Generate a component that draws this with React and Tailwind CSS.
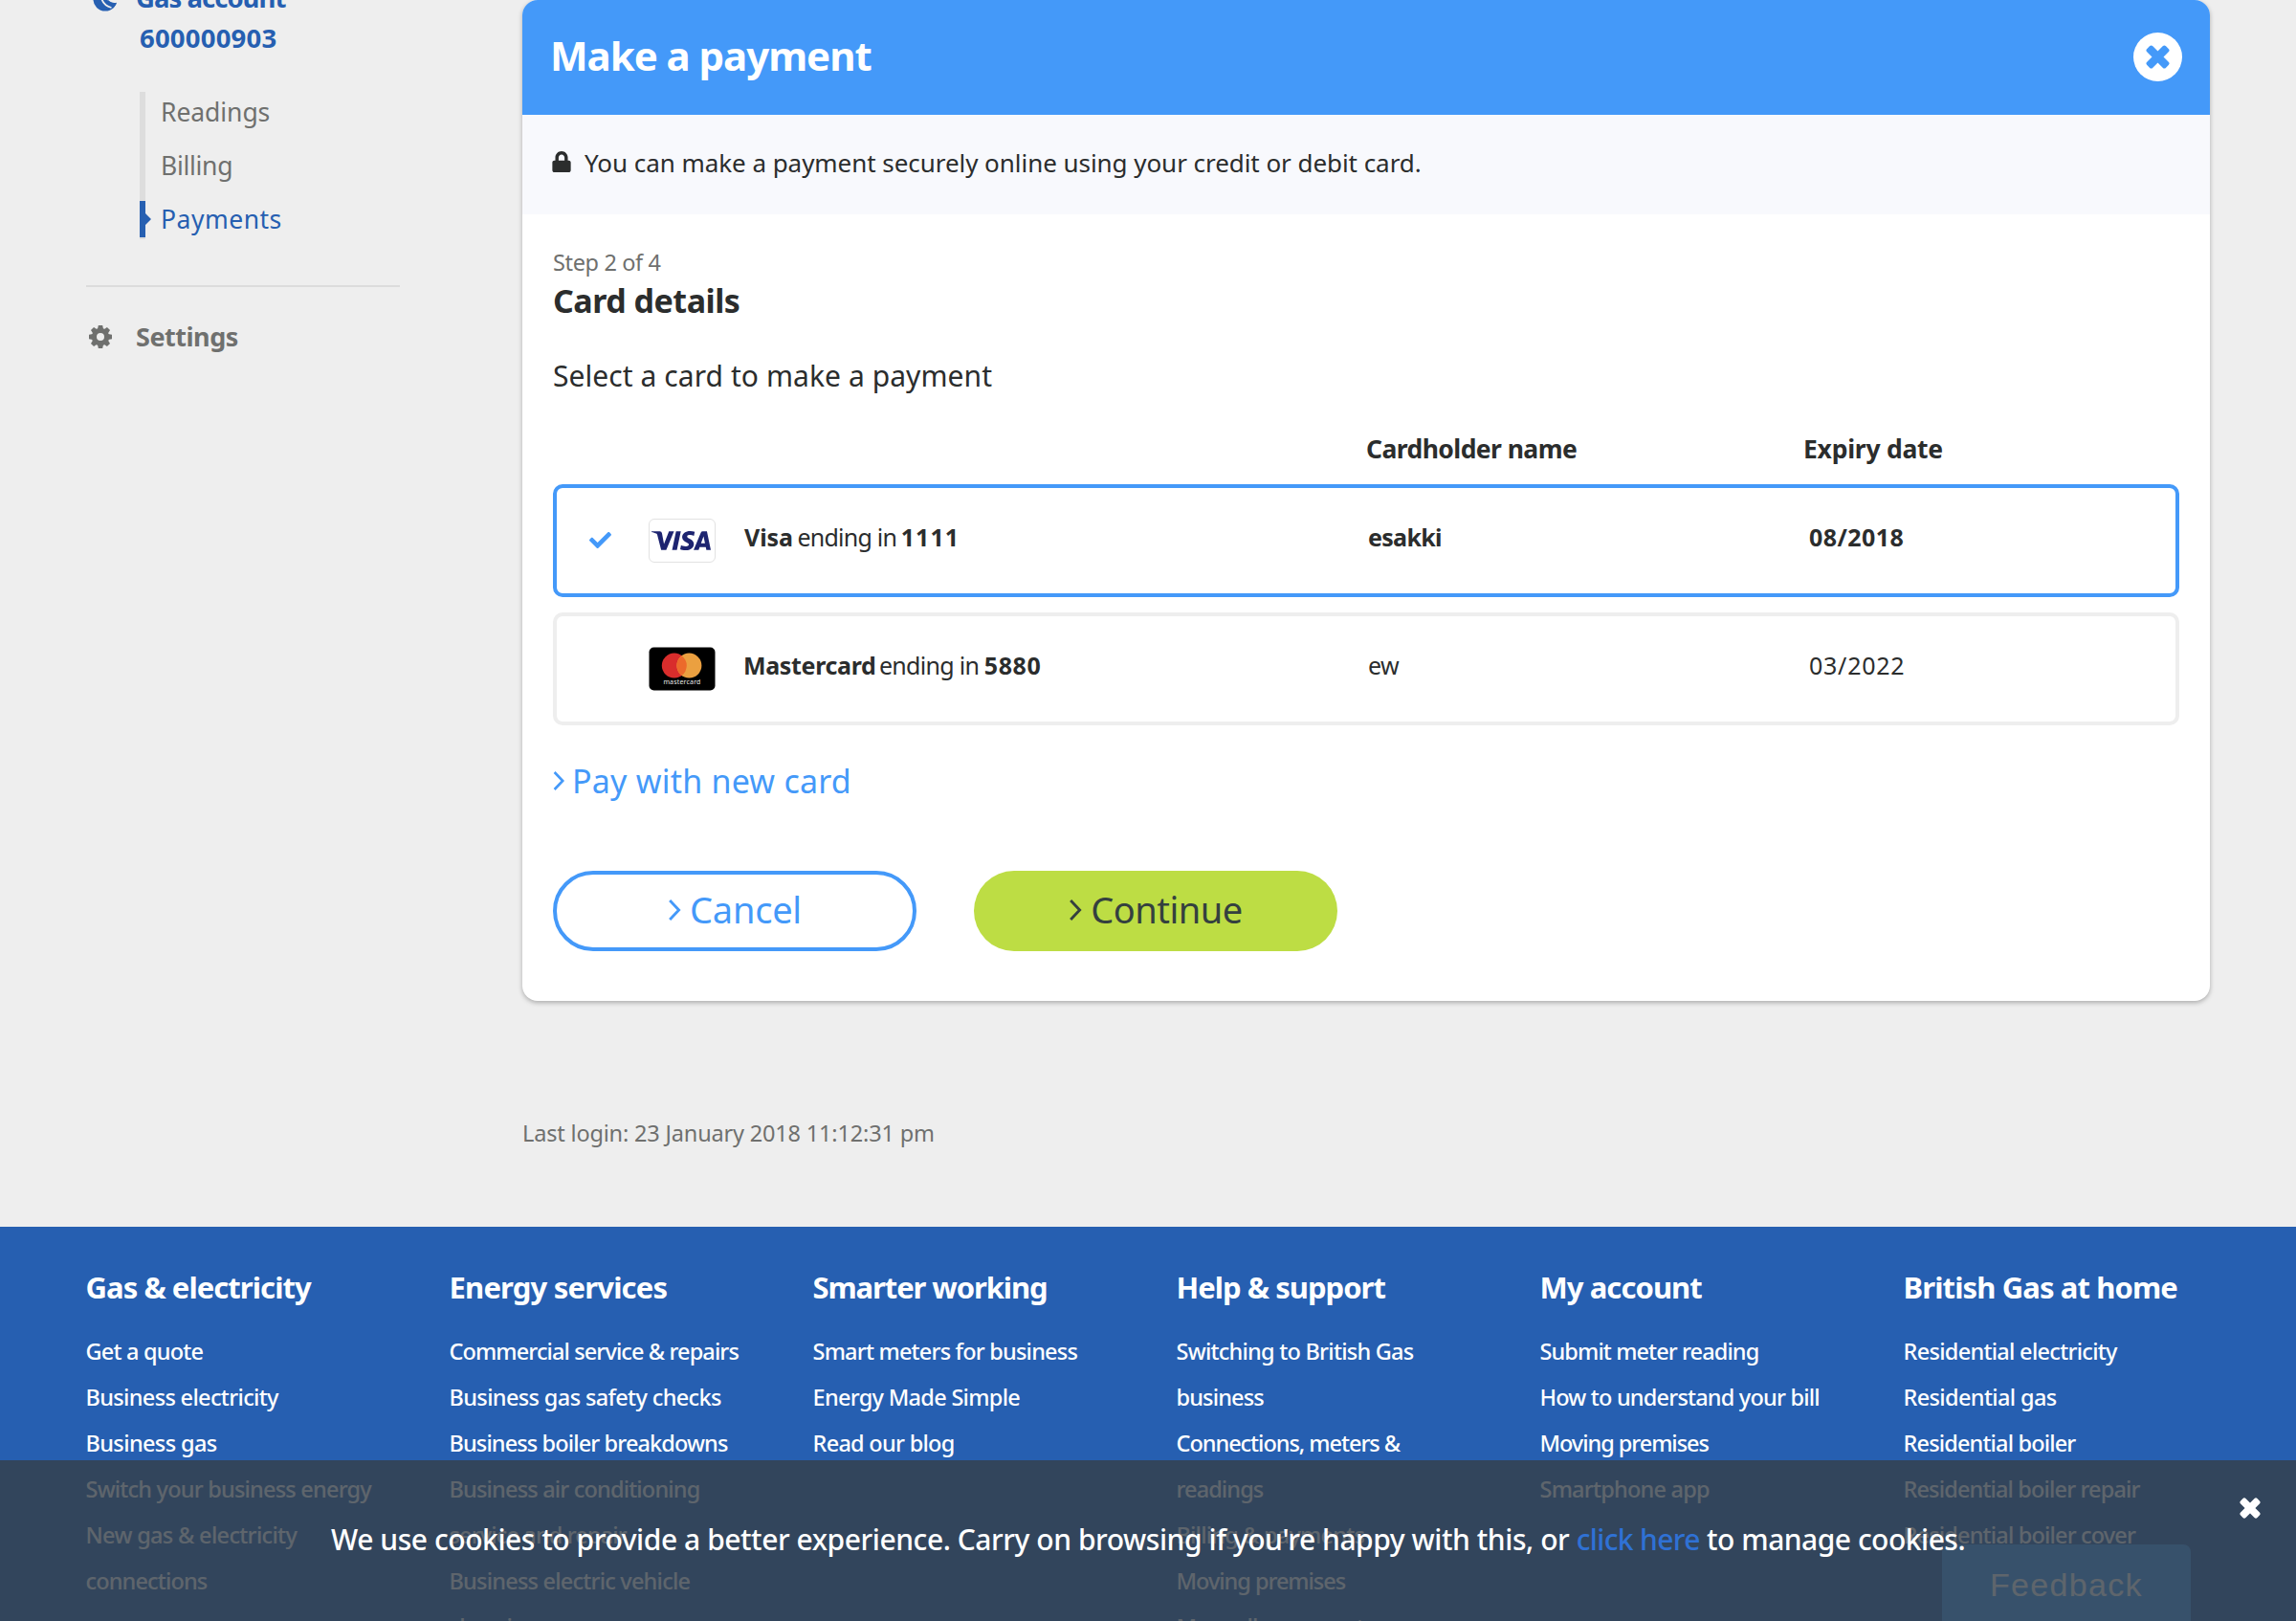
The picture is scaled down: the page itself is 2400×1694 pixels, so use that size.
import { FaCheck, FaLock } from "react-icons/fa";
import { SiVisa } from "react-icons/si";

const footerColumns = [
  {
    title: "Gas & electricity",
    titleClass: "tracking-[-0.0302em]",
    links: [
      ["Get a quote", "tracking-[-0.79px]"],
      ["Business electricity", "tracking-[-0.66px]"],
      ["Business gas", "tracking-[-0.62px]"],
      ["Switch your business energy", "tracking-[-0.79px]"],
      ["New gas & electricity", "tracking-[-0.67px]"],
      ["connections", "tracking-[-0.85px]"],
    ],
  },
  {
    title: "Energy services",
    titleClass: "tracking-[-0.0261em]",
    links: [
      ["Commercial service & repairs", "tracking-[-0.89px]"],
      ["Business gas safety checks", "tracking-[-0.63px]"],
      ["Business boiler breakdowns", "tracking-[-0.88px]"],
      ["Business air conditioning", "tracking-[-0.82px]"],
      ["service and repair", "tracking-[-0.86px]"],
      ["Business electric vehicle", "tracking-[-0.78px]"],
      ["charging", "tracking-[-0.8px]"],
    ],
  },
  {
    title: "Smarter working",
    titleClass: "tracking-[-0.0358em]",
    links: [
      ["Smart meters for business", "tracking-[-0.79px]"],
      ["Energy Made Simple", "tracking-[-0.7px]"],
      ["Read our blog", "tracking-[-0.72px]"],
    ],
  },
  {
    title: "Help & support",
    titleClass: "tracking-[-0.0311em]",
    links: [
      ["Switching to British Gas", "tracking-[-0.75px]"],
      ["business", "tracking-[-0.86px]"],
      ["Connections, meters &", "tracking-[-1.03px]"],
      ["readings", "tracking-[-0.9px]"],
      ["Billing & payments", "tracking-[-0.8px]"],
      ["Moving premises", "tracking-[-1.03px]"],
      ["Manually payment", "tracking-[-0.8px]"],
    ],
  },
  {
    title: "My account",
    titleClass: "tracking-[-0.0302em]",
    links: [
      ["Submit meter reading", "tracking-[-0.9px]"],
      ["How to understand your bill", "tracking-[-0.8px]"],
      ["Moving premises", "tracking-[-1.05px]"],
      ["Smartphone app", "tracking-[-0.78px]"],
    ],
  },
  {
    title: "British Gas at home",
    titleClass: "tracking-[-0.0285em]",
    links: [
      ["Residential electricity", "tracking-[-0.71px]"],
      ["Residential gas", "tracking-[-0.64px]"],
      ["Residential boiler", "tracking-[-0.85px]"],
      ["Residential boiler repair", "tracking-[-0.86px]"],
      ["Residential boiler cover", "tracking-[-0.83px]"],
    ],
  },
];

function Chevron({ className }) {
  return (
    <svg viewBox="0 0 12 20" className={className} fill="none" stroke="currentColor" strokeWidth="2.6">
      <path d="M1.6 1 L10.2 10 L1.6 19" />
    </svg>
  );
}

function Cross({ className }) {
  return (
    <svg viewBox="-12.5 -12.5 25 25" className={className} fill="currentColor">
      <rect x="-14" y="-4.3" width="28" height="8.6" rx="2.4" transform="rotate(45)" />
      <rect x="-14" y="-4.3" width="28" height="8.6" rx="2.4" transform="rotate(-45)" />
    </svg>
  );
}

function Gear({ className }) {
  return (
    <svg viewBox="-12 -12 24 24" className={className} fill="currentColor">
      <circle r="6.6" fill="none" stroke="currentColor" strokeWidth="5.2" />
      {[0, 45, 90, 135, 180, 225, 270, 315].map((a) => (
        <path key={a} d="M-3 -8 L-2.2 -12 H2.2 L3 -8 Z" transform={`rotate(${a})`} />
      ))}
    </svg>
  );
}

function GasIcon() {
  return (
    <svg viewBox="0 0 26 26" className="h-[26px] w-[26px]">
      <circle cx="13" cy="13" r="12.6" fill="#265fb1" />
      <path d="M8.6 10 C9.4 15.5 12.5 20 19.5 22" fill="none" stroke="#eeeeee" strokeWidth="1.8" />
      <path d="M12.4 4 C11.6 11 15 18 26 17.4 L26 0 Z" fill="#eeeeee" />
      <path d="M15.5 13.4 C18 16.6 21 17.4 25 16.8 C24.2 19 23 21 21.4 22.2 C18 20.6 15.8 17.4 15.5 13.4 Z" fill="#265fb1" />
    </svg>
  );
}

function VisaLogo() {
  return (
    <div className="flex h-[46px] w-[70px] items-center justify-center rounded-[6px] border border-[#e2e2e2] bg-white">
      <SiVisa className="-ml-[2px] h-[62px] w-[62px] shrink-0 text-[#1d2470]" />
    </div>
  );
}

function MastercardLogo() {
  return (
    <svg viewBox="0 0 70 46" className="h-[46px] w-[70px]">
      <rect x="0.5" y="0.5" width="69" height="45" rx="5" fill="#000" />
      <circle cx="26.8" cy="19.6" r="13" fill="#d92d2c" />
      <circle cx="42.4" cy="19.6" r="13" fill="#eba040" />
      <path d="M34.6 9.2 A13 13 0 0 1 34.6 30 A13 13 0 0 1 34.6 9.2 Z" fill="#ec6a2b" />
      <text x="15.4" y="38.6" textLength="39" fontSize="7" fill="#e8e8e8" fontFamily="Noto Sans, sans-serif">
        mastercard
      </text>
    </svg>
  );
}

function SideItem({ label, className }) {
  return <li className={`h-14 leading-[56px] ${className}`}>{label}</li>;
}

function Sidebar() {
  return (
    <aside className="-mt-[23px] ml-[90px] w-[328px] text-[#6f706e]">
      <div className="flex font-bold text-[#265fb1]">
        <div className="w-[52px] pt-[9px] pl-[7px]">
          <GasIcon />
        </div>
        <div className="text-[27.5px] leading-[42px] whitespace-nowrap">
          <div className="tracking-[-0.0354em]">Gas account</div>
          <div className="pl-[4px] tracking-[0.0071em]">600000903</div>
        </div>
      </div>
      <div className="mt-[35px] ml-14 flex h-[154px] gap-4 text-[26.5px]">
        <div className="relative w-[6px] bg-[#dddddd]">
          <svg viewBox="0 0 12 38" className="absolute top-[114px] left-0 h-[38px] w-3 max-w-none" fill="#265fb1">
            <path d="M0 0 H6 V13 L12 19 L6 25 V38 H0 Z" />
          </svg>
        </div>
        <ul className="-mt-[7px]">
          <SideItem label="Readings" className="tracking-[-0.07px]" />
          <SideItem label="Billing" className="tracking-[-0.3px]" />
          <SideItem label="Payments" className="tracking-[0.5px] text-[#265fb1]" />
        </ul>
      </div>
      <div className="mt-12 h-[2px] bg-[#dcdcdc]" />
      <div className="mt-8 flex h-10 items-center pl-[3px]">
        <Gear className="h-6 w-6" />
        <span className="ml-[25px] text-[27px] leading-10 font-bold tracking-[-0.018em]">Settings</span>
      </div>
    </aside>
  );
}

function CardRow({ selected, logo, children, name, expiry, nameClass }) {
  return (
    <div
      className={`grid h-[118px] grid-cols-[96px_100px_652px_460px_1fr] items-center rounded-[10px] border-4 text-[25px] ${
        selected ? "border-[#4499f9]" : "border-[#eeeeee]"
      }`}
    >
      <div className="pl-[34px]">{selected && <FaCheck className="-mt-[2px] h-[23px] w-[23px] text-[#4499f9]" />}</div>
      <div>{logo}</div>
      <div className="pb-2 leading-10 whitespace-nowrap">{children}</div>
      <div className={`pb-2 leading-10 ${nameClass}`}>{name}</div>
      <div className={`pb-2 pl-px leading-10 ${selected ? "font-bold tracking-[0.0175em]" : "tracking-[0.03em]"}`}>
        {expiry}
      </div>
    </div>
  );
}

function PaymentCard() {
  return (
    <section className="h-[1046px] w-[1764px] overflow-hidden rounded-2xl bg-white shadow-[0_2px_5px_rgba(0,0,0,0.28)]">
      <header className="flex h-[120px] items-center justify-between bg-[#4499f9] pr-[29px] pl-[29px] text-white">
        <h1 className="pb-1 text-[42px] leading-[60px] font-bold tracking-[-0.0247em]">Make a payment</h1>
        <button className="-mt-[2px] flex h-[51px] w-[51px] items-center justify-center rounded-full bg-white">
          <Cross className="h-[25px] w-[25px] text-[#4499f9]" />
        </button>
      </header>
      <div className="flex h-[104px] items-center bg-[#f8f9fd] pb-1 pl-[31px]">
        <FaLock className="-mt-[2px] h-[22px] w-[20px]" />
        <p className="ml-[14px] text-[26px] leading-10 tracking-[-0.05px]">
          You can make a payment securely online using your credit or debit card.
        </p>
      </div>
      <div className="px-8 pt-9">
        <div className="text-[23.5px] leading-7 tracking-[-0.36px] text-[#6f706e]">Step 2 of 4</div>
        <h2 className="mt-[6px] text-[34px] leading-10 font-bold tracking-[-0.0145em]">Card details</h2>
        <p className="mt-[39px] text-[30px] leading-10 tracking-[0.07px]">Select a card to make a payment</p>
        <div className="mt-9 grid grid-cols-[850px_457px_1fr] text-[26.5px] leading-10 font-bold">
          <span />
          <span className="tracking-[-0.0215em]">Cardholder name</span>
          <span className="tracking-[-0.0095em]">Expiry date</span>
        </div>
        <div className="mt-[17px] flex flex-col gap-4">
          <CardRow selected logo={<VisaLogo />} name="esakki" nameClass="font-bold tracking-[-0.0276em]" expiry="08/2018">
            <b className="tracking-[-0.0037em]">Visa</b>{" "}
            <span className="-ml-[2px] tracking-[-0.03em]">ending in</span>{" "}
            <b className="-ml-[2px] tracking-[0.04em]">1111</b>
          </CardRow>
          <CardRow logo={<MastercardLogo />} name="ew" nameClass="tracking-[-0.6px]" expiry="03/2022">
            <b className="-ml-px tracking-[-0.0138em]">Mastercard</b>{" "}
            <span className="-ml-[3px] tracking-[-0.0283em]">ending in</span>{" "}
            <b className="-ml-[1px] tracking-[0.025em]">5880</b>
          </CardRow>
        </div>
        <a className="mt-[33px] flex h-12 items-center text-[#4499f9]">
          <Chevron className="mt-[2px] h-5 w-3" />
          <span className="mt-px ml-2 text-[34px] leading-[48px] tracking-[0.22px]">Pay with new card</span>
        </a>
        <div className="mt-[71px] flex gap-[60px] text-[38px]">
          <button className="flex h-[84px] w-[380px] items-center justify-center rounded-full border-4 border-[#4499f9] text-[#4499f9]">
            <Chevron className="-mt-[2px] h-[22px] w-[14px]" />
            <span className="-mt-[4px] ml-[9px] leading-[60px] tracking-[-0.25px]">Cancel</span>
          </button>
          <button className="flex h-[84px] w-[380px] items-center justify-center rounded-full bg-[#bddd44] text-[#34403f]">
            <Chevron className="-mt-[2px] h-[22px] w-[14px]" />
            <span className="-mt-[4px] ml-[9px] leading-[60px] tracking-[-0.5px]">Continue</span>
          </button>
        </div>
      </div>
    </section>
  );
}

function Footer() {
  return (
    <footer className="grid h-[412px] grid-cols-[repeat(6,380px)] overflow-hidden bg-[#265fb1] pt-[43px] pl-[89.5px] whitespace-nowrap text-white">
      {footerColumns.map((col) => (
        <div key={col.title}>
          <h3 className={`text-[31px] leading-10 font-bold ${col.titleClass}`}>{col.title}</h3>
          <ul className="mt-[23px] text-[23.5px] leading-[48px] font-medium">
            {col.links.map(([label, cls]) => (
              <li key={label} className={cls}>
                {label}
              </li>
            ))}
          </ul>
        </div>
      ))}
    </footer>
  );
}

export default function App() {
  return (
    <div className="relative h-[1694px] w-[2400px] overflow-hidden bg-[#eeeeee] font-['Noto_Sans',sans-serif] text-[#2b2d2d]">
      <div className="flex h-[1282px]">
        <Sidebar />
        <main className="ml-[128px]">
          <PaymentCard />
          <p className="mt-[118px] text-[23.5px] leading-10 tracking-[-0.17px] text-[#6f706e]">
            Last login: 23 January 2018 11:12:31 pm
          </p>
        </main>
      </div>
      <Footer />
      <div className="absolute right-[110px] bottom-0 h-20 w-[260px] rounded-t-lg bg-[#3f9df8] pl-[50px] font-['Liberation_Sans',sans-serif] text-[34px] leading-[84px] tracking-[1.33px] text-white">
        Feedback
      </div>
      <div className="absolute inset-x-0 bottom-0 flex h-[168px] bg-[rgba(54,62,71,0.8)] pl-[346px] text-white">
        <p className="pt-[63px] text-[30px] leading-10 font-medium tracking-[-0.44px] whitespace-nowrap">
          We use cookies to provide a better experience. Carry on browsing if you're happy with this, or{" "}
          <a className="tracking-[-0.65px] text-[#2f71d4]">click here</a>{" "}
          <span className="tracking-[-0.5px]">to manage cookies.</span>
        </p>
        <Cross className="mt-[39px] mr-[37px] ml-auto h-[22px] w-[22px]" />
      </div>
    </div>
  );
}
